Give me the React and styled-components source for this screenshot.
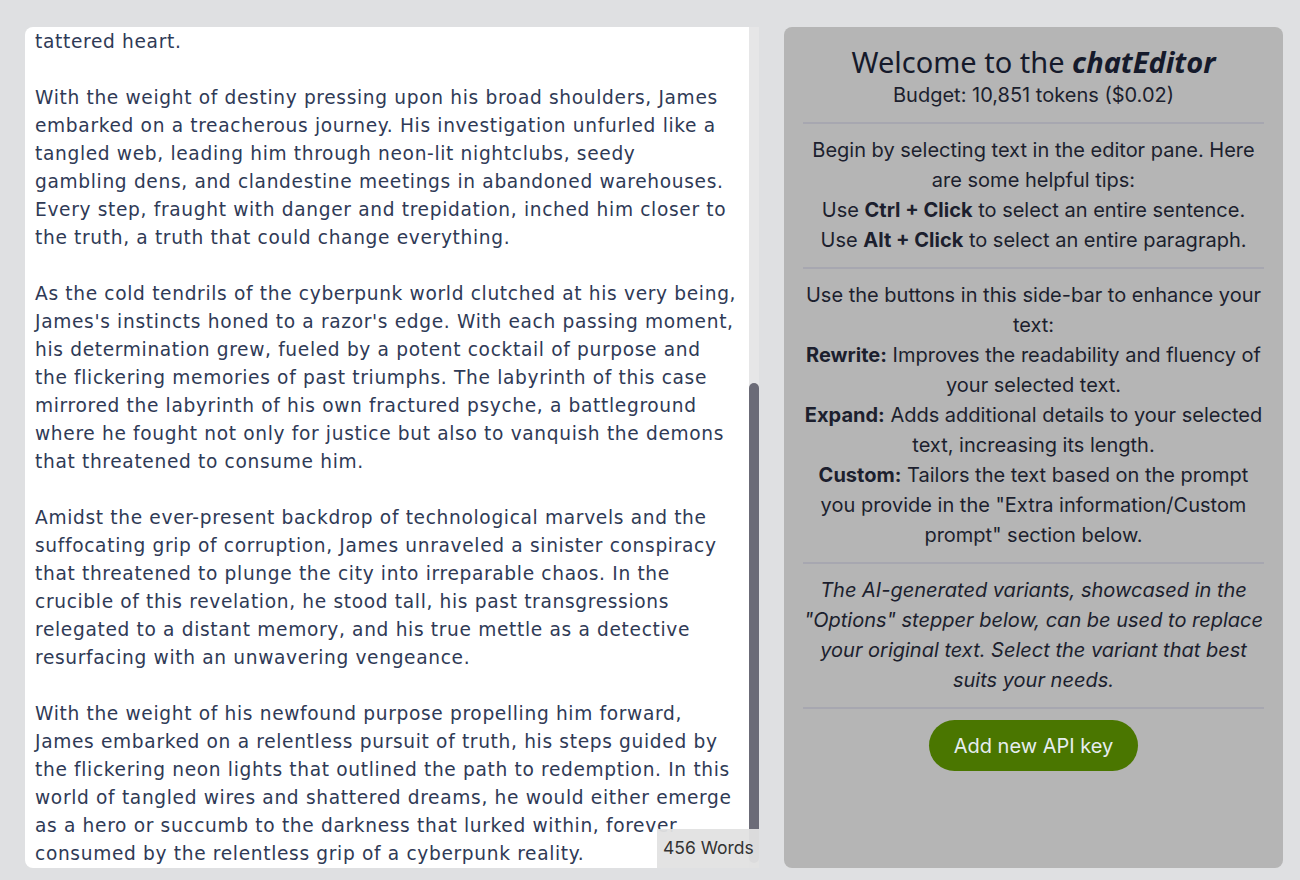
import React from 'react'
import styled, { createGlobalStyle } from 'styled-components'

const GlobalStyle = createGlobalStyle`
  html, body {
    margin: 0;
    padding: 0;
    background: #dfe0e2;
  }
  * { box-sizing: border-box; }
`;

const story = [
  ["tattered heart."],
  [
    "With the weight of destiny pressing upon his broad shoulders, James",
    "embarked on a treacherous journey. His investigation unfurled like a",
    "tangled web, leading him through neon-lit nightclubs, seedy",
    "gambling dens, and clandestine meetings in abandoned warehouses.",
    "Every step, fraught with danger and trepidation, inched him closer to",
    "the truth, a truth that could change everything.",
  ],
  [
    "As the cold tendrils of the cyberpunk world clutched at his very being,",
    "James's instincts honed to a razor's edge. With each passing moment,",
    "his determination grew, fueled by a potent cocktail of purpose and",
    "the flickering memories of past triumphs. The labyrinth of this case",
    "mirrored the labyrinth of his own fractured psyche, a battleground",
    "where he fought not only for justice but also to vanquish the demons",
    "that threatened to consume him.",
  ],
  [
    "Amidst the ever-present backdrop of technological marvels and the",
    "suffocating grip of corruption, James unraveled a sinister conspiracy",
    "that threatened to plunge the city into irreparable chaos. In the",
    "crucible of this revelation, he stood tall, his past transgressions",
    "relegated to a distant memory, and his true mettle as a detective",
    "resurfacing with an unwavering vengeance.",
  ],
  [
    "With the weight of his newfound purpose propelling him forward,",
    "James embarked on a relentless pursuit of truth, his steps guided by",
    "the flickering neon lights that outlined the path to redemption. In this",
    "world of tangled wires and shattered dreams, he would either emerge",
    "as a hero or succumb to the darkness that lurked within, forever",
    "consumed by the relentless grip of a cyberpunk reality.",
  ],
];

const App = () => {
  return (
    <>
      <GlobalStyle />
      <Page>
        <EditorPane>
          <Editor>
            {story.map((para, i) => (
              <Paragraph key={i}>
                {para.map((line, j) => (
                  <Line key={j}>{line}</Line>
                ))}
              </Paragraph>
            ))}
          </Editor>
          <ScrollTrack>
            <ScrollThumb />
          </ScrollTrack>
          <WordCount>456 Words</WordCount>
        </EditorPane>

        <Sidebar>
          <Header>
            <Title>Welcome to the <b><i>chatEditor</i></b></Title>
            <Budget>Budget: 10,851 tokens ($0.02)</Budget>
          </Header>
          <Divider />
          <Section>
            Begin by selecting text in the editor pane. Here are some helpful tips:
            <br />
            Use <b>Ctrl + Click</b> to select an entire sentence.
            <br />
            Use <b>Alt + Click</b> to select an entire paragraph.
          </Section>
          <Divider />
          <Section>
            Use the buttons in this side-bar to enhance your text:
            <br />
            <b>Rewrite:</b> Improves the readability and fluency of your selected text.
            <br />
            <b>Expand:</b> Adds additional details to your selected text, increasing its length.
            <br />
            <b>Custom:</b> Tailors the text based on the prompt you provide in the "Extra information/Custom prompt" section below.
          </Section>
          <Divider />
          <Section $italic>
            The AI-generated variants, showcased in the "Options" stepper below, can be used to replace your original text. Select the variant that best suits your needs.
          </Section>
          <Divider />
          <ApiButton>Add new API key</ApiButton>
        </Sidebar>
      </Page>
    </>
  )
};

const Page = styled.main`
  display: grid;
  grid-template-columns: 734px 499px;
  column-gap: 25px;
  height: 880px;
  padding: 27px 17px 12px 25px;
  overflow: hidden;
`;

const EditorPane = styled.section`
  position: relative;
  display: flex;
  min-height: 0;
`;

const Editor = styled.div`
  flex: 1;
  background: #fff;
  border-radius: 8px 0 0 8px;
  padding: 1px 10px 0;
  overflow: hidden;
  font-family: "DejaVu Sans", sans-serif;
  font-size: 18.6px;
  letter-spacing: 0.66px;
  line-height: 28px;
  color: #2f3a56;
`;

const Paragraph = styled.p`
  margin: 0 0 28px 0;
  &:last-child { margin-bottom: 0; }
`;

const Line = styled.span`
  display: block;
  white-space: nowrap;
`;

const ScrollTrack = styled.div`
  width: 10px;
  display: flex;
  flex-direction: column;
  justify-content: flex-end;
  padding-bottom: 5px;
  background: #e6e6e7;
  border-radius: 0 0 6px 0;
`;

const ScrollThumb = styled.div`
  height: 480px;
  width: 10px;
  border-radius: 5px;
  background: #6b6b77;
`;

const WordCount = styled.div`
  position: absolute;
  right: 0;
  bottom: 0;
  width: 102px;
  height: 39px;
  padding: 8px 0 0 6px;
  background: rgba(226, 226, 226, 0.95);
  font-family: Inter, sans-serif;
  font-size: 17.5px;
  color: #333;
  white-space: nowrap;
  overflow: hidden;
`;

const Sidebar = styled.aside`
  background: #b5b5b5;
  border-radius: 8px;
  padding: 17px 19px;
  display: flex;
  flex-direction: column;
  font-family: Inter, sans-serif;
  color: #1c1f2e;
  text-align: center;
`;

const Header = styled.header`
  display: flex;
  flex-direction: column;
  align-items: center;
`;

const Title = styled.h1`
  margin: 0;
  font-family: "Noto Sans", sans-serif;
  font-size: 29px;
  font-weight: 400;
  line-height: 36px;
  color: #151a2b;
`;

const Budget = styled.div`
  font-size: 20px;
  line-height: 30px;
`;

const Divider = styled.hr`
  width: 100%;
  border: none;
  height: 2px;
  background: #a7a7b0;
  margin: 12px 0 11px;
`;

const Section = styled.p`
  margin: 0;
  font-size: 20px;
  line-height: 30px;
  font-style: ${p => (p.$italic ? 'italic' : 'normal')};
  b { font-weight: 700; }
`;

const ApiButton = styled.button`
  align-self: center;
  margin-top: 0;
  width: 209px;
  height: 51px;
  border: none;
  border-radius: 26px;
  background: #4a7600;
  color: #e6edef;
  font-family: Inter, sans-serif;
  font-size: 20px;
  cursor: pointer;
`;

export default App;
